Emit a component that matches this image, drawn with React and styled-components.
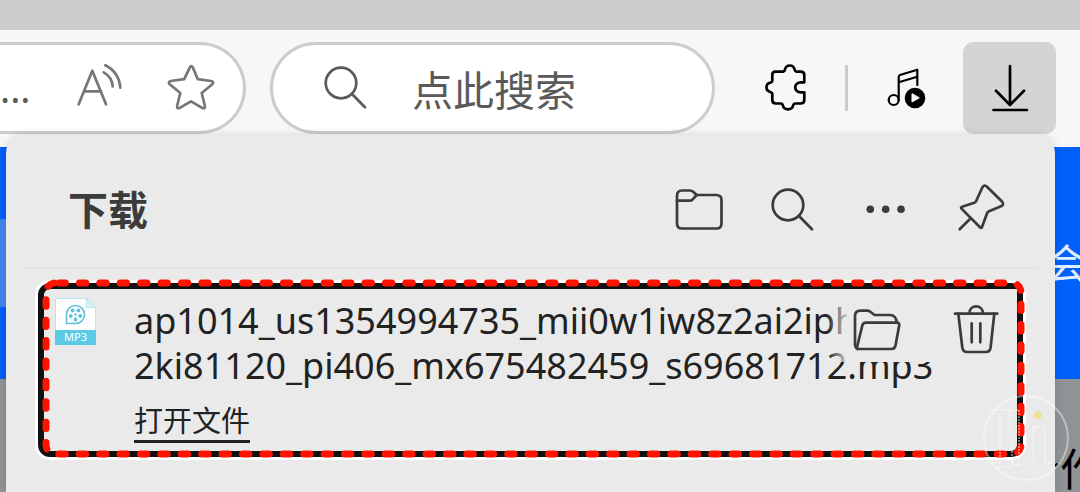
import styled, { createGlobalStyle } from "styled-components";

export default function App() {
	return (
		<Browser>
			<GlobalStyle />
			<TitleStrip />
			<Toolbar>
				<AddressBar>
					<AddressInput aria-label="Address" defaultValue="...." />
					<IconButton aria-label="Read aloud" tone="#767676">
						<ReadAloudIcon />
					</IconButton>
					<IconButton aria-label="Favorite" tone="#767676">
						<StarIcon />
					</IconButton>
				</AddressBar>
				<SearchBar>
					<SearchIcon />
					<SearchInput aria-label="搜索" placeholder="点此搜索" />
				</SearchBar>
				<ToolGroup>
					<IconButton aria-label="Extensions" tone="#000">
						<PuzzleIcon />
					</IconButton>
					<Separator />
					<IconButton aria-label="Music" tone="#000">
						<MusicIcon />
					</IconButton>
				</ToolGroup>
				<DownloadButton aria-label="下载">
					<DownloadIcon />
				</DownloadButton>
			</Toolbar>
			<Page>
				<Hero>
					<HeroCard />
					<HeroText>会</HeroText>
				</Hero>
				<Partners>
					<PartnersText>合作</PartnersText>
				</Partners>
			</Page>
			<Panel>
				<PanelHeader>
					<PanelTitle>下载</PanelTitle>
					<PanelTools>
						<IconButton aria-label="Open folder" tone="#3b3b3b">
							<FolderIcon />
						</IconButton>
						<IconButton aria-label="Search downloads" tone="#3b3b3b">
							<SearchIcon />
						</IconButton>
						<IconButton aria-label="More" tone="#3b3b3b">
							<MoreIcon />
						</IconButton>
						<IconButton aria-label="Pin" tone="#3b3b3b">
							<PinIcon />
						</IconButton>
					</PanelTools>
				</PanelHeader>
				<DownloadItem>
					<ItemBody>
						<FileIcon />
						<ItemInfo>
							<FileName>
								ap1014_us1354994735_mii0w1iw8z2ai2iph
								<br />
								2ki81120_pi406_mx675482459_s69681712.mp3
							</FileName>
							<OpenLink href="#">打开文件</OpenLink>
						</ItemInfo>
						<ItemActions>
							<IconButton aria-label="Show in folder" tone="#3b3b3b">
								<OpenFolderIcon />
							</IconButton>
							<IconButton aria-label="Delete" tone="#3b3b3b">
								<TrashIcon />
							</IconButton>
						</ItemActions>
					</ItemBody>
					<Marker aria-hidden="true">
						<rect width="100%" height="100%" rx="9" />
					</Marker>
				</DownloadItem>
			</Panel>
			<Watermark viewBox="0 0 86 86" aria-hidden="true">
				<circle cx="43" cy="43" r="42" />
				<g strokeDasharray="2 1">
					<path d="M6 15H36M17 18V68M27 16V40M36 15V70M29 47V72M12 72H30" />
					<path d="M50 32H62V68H74M50 32V66M30 70H38" />
				</g>
				<circle cx="55" cy="20" r="4" className="spark" />
			</Watermark>
		</Browser>
	);
}

function ReadAloudIcon() {
	return (
		<Icon>
			<path d="M3.7 40.3L17.3 6.7L31 40.3M9 27.3H26" />
			<path d="M28.7 8.3Q37 13 37.7 22.3M30.3 1.3Q44 8 45.3 23.7" />
		</Icon>
	);
}

function StarIcon() {
	return (
		<Icon>
			<path d="M22.7 3.6Q24.3 .8 25.9 3.6L30.8 15.2L44 17Q47.5 18 45.3 20.3L34.7 29L37.9 42Q38.2 45.2 35.2 43.9L24 37.3L12.8 43.9Q9.8 45.2 10.1 42L13.3 29L2.7 20.3Q.5 18 4 17L17.2 15.2Z" />
		</Icon>
	);
}

function SearchIcon() {
	return (
		<Icon>
			<circle cx="19" cy="19" r="15.3" />
			<path d="M30 30L43 43.3" />
		</Icon>
	);
}

function PuzzleIcon() {
	return (
		<Icon>
			<path d="M13.3 7.7H21.3C22.3 7.7 22.6 7 22.8 6C24 0 31.6 0 32.8 6C33 7 33.3 7.7 34.3 7.7H38.6Q42.3 7.7 42.3 11V18.3H39C31.3 18.3 31.3 28.3 39 28.3H42.3V36Q42.3 39.5 38.6 39.5H33C32 39.5 31.7 40 31.3 41C30 46.7 22 46.7 20.7 41C20.4 40 20 39.5 19 39.5H14Q10.3 39.5 10.3 36V30C10.3 29 9.7 28.5 8.8 28.2C3 27 3 19.7 8.8 18.5C9.7 18.2 10.3 17.8 10.3 16.8V11Q10.3 7.7 13.3 7.7Z" />
		</Icon>
	);
}

function MusicIcon() {
	return (
		<Icon>
			<g strokeWidth="2.2">
				<circle cx="10.7" cy="36" r="5" />
				<path d="M15.7 36V13Q15.7 11.5 17 11L34.3 5.7V21M15.7 18.3L34.3 12.7" />
			</g>
			<circle cx="32" cy="34" r="10.3" fill="#000" stroke="none" />
			<path d="M29 30V38L36 34Z" fill="#fff" stroke="#fff" strokeWidth="1" />
		</Icon>
	);
}

function DownloadIcon() {
	return (
		<Icon>
			<path d="M24 2V41M10 26.7L24 41L38 26.7M7.5 46H41" />
		</Icon>
	);
}

function FolderIcon() {
	return (
		<Icon>
			<path d="M2 10Q2 4.5 7 4.5H14.5Q17 4.5 18.5 6L21.7 9H41Q46.5 9 46.5 14V37.5Q46.5 42.5 41.5 42.5H7Q2 42.5 2 37.5Z" />
			<path d="M2 14.7H14.5Q16.5 14.7 17.7 13.3L21.7 9" />
		</Icon>
	);
}

function MoreIcon() {
	return (
		<Icon>
			<g fill="currentColor" stroke="none">
				<circle cx="7.3" cy="23.3" r="3.8" />
				<circle cx="22.7" cy="23.3" r="3.8" />
				<circle cx="38" cy="23.3" r="3.8" />
			</g>
		</Icon>
	);
}

function PinIcon() {
	return (
		<Icon>
			<path d="M25.3 1.5Q27.3 -2 30 .7L45 15.5Q47.3 18.3 44.5 20L31.5 25.5Q30.5 26 30 27.5L25 41Q24.4 42.6 23 41.3L4.5 22.6Q3.3 21.3 5 20.8L17.3 16.8Q18.7 16.3 19.2 15Z" />
			<path d="M13.7 32.3L2.7 43.3" />
		</Icon>
	);
}

function OpenFolderIcon() {
	return (
		<Icon>
			<path d="M4.5 43Q2 41.5 2 38V10Q2 4.7 7.5 4.7H14Q16 4.7 17.3 5.8L21.5 9H37Q43 9 43.7 16.5" />
			<path d="M13 16.7H44Q46.7 16.7 46.2 19.5L42.5 39.5Q41.8 43 38.5 43H6.5Q3.5 43 4.3 40L9.3 19.5Q10 16.7 13 16.7Z" />
		</Icon>
	);
}

function TrashIcon() {
	return (
		<Icon>
			<path d="M3 7.7H45.3M17.3 7.7C17.3 -2 31 -2 31 7.7" />
			<path d="M6.3 7.7L10.3 41.5Q11 46 15 46H34Q38 46 38.6 41.5L42.3 7.7M19.7 17.3V36.3M28.3 17.3V36.3" />
		</Icon>
	);
}

function FileIcon() {
	return (
		<FileSvg viewBox="0 0 41 47" aria-hidden="true">
			<path d="M.5 .5H31.5L40.5 9.5V46.5H.5Z" fill="#fff" stroke="#b4e6f2" />
			<path d="M31.5 .5V9.5H40.5Z" fill="#d8f1f7" stroke="#b4e6f2" />
			<path d="M0 32H41V47H0Z" fill="#5bcbe5" />
			<g fill="none" stroke="#5bc0dc" strokeWidth="1.5">
				<path d="M11.5 25.5V16.5A9 9 0 1 1 20.5 25.5Z" />
			</g>
			<g fill="#5bc0dc">
				<circle cx="20.5" cy="16.5" r="1.2" />
				<circle cx="20.5" cy="21.5" r="1.9" />
				<circle cx="15.8" cy="18" r="1.9" />
				<circle cx="25.2" cy="18" r="1.9" />
				<circle cx="17.6" cy="12.5" r="1.9" />
				<circle cx="23.4" cy="12.5" r="1.9" />
			</g>
			<text x="20.5" y="43" textAnchor="middle">
				MP3
			</text>
		</FileSvg>
	);
}

const GlobalStyle = createGlobalStyle`
	* {
		box-sizing: border-box;
	}
	body {
		margin: 0;
		font-family: "Noto Sans", "Noto Sans CJK SC", sans-serif;
	}
	button, input {
		border: 0;
		padding: 0;
		background: none;
		font-family: inherit;
		outline: none;
	}
`;

const Browser = styled.div`
	position: relative;
	display: flex;
	flex-direction: column;
	min-height: 100vh;
	overflow: hidden;
`;

const TitleStrip = styled.div`
	height: 30px;
	background: #ccc;
`;

const Toolbar = styled.header`
	display: flex;
	padding: 12px 24px 13px 0;
	background: #f7f7f7;
`;

const AddressBar = styled.div`
	flex: 1;
	min-width: 0;
	height: 92px;
	display: flex;
	align-items: center;
	gap: 44px;
	padding-right: 28px;
	background: #fff;
	border: 3px solid #ccc;
	border-left: 0;
	border-radius: 0 46px 46px 0;
`;

const AddressInput = styled.input`
	flex: 1;
	width: 0;
	min-width: 0;
	font-size: 38px;
	line-height: 48px;
	text-align: right;
	color: #5a5a5a;
`;

const SearchBar = styled.label`
	width: 445px;
	height: 92px;
	margin-left: 24px;
	display: flex;
	align-items: center;
	gap: 42px;
	padding: 0 49px;
	color: #5a5a5a;
	background: #fff;
	border: 3px solid #ccc;
	border-radius: 46px;
`;

const SearchInput = styled.input`
	flex: 1;
	min-width: 0;
	font-size: 41px;
	line-height: 60px;
	color: #5a5a5a;
	font-family: "Noto Sans CJK SC", sans-serif;
	&::placeholder {
		color: #5a5a5a;
		opacity: 1;
	}
`;

const ToolGroup = styled.div`
	display: flex;
	align-items: center;
	gap: 35px;
	padding: 0 32px 0 47px;
`;

const Separator = styled.div`
	width: 3px;
	height: 46px;
	background: #ccc;
`;

const IconButton = styled.button`
	flex: none;
	width: 48px;
	height: 48px;
	color: ${({ tone }) => tone};
`;

const DownloadButton = styled.button`
	width: 93px;
	height: 92px;
	display: flex;
	justify-content: center;
	align-items: center;
	background: #d4d4d4;
	border-radius: 10px;
	color: #000;
`;

const Icon = styled.svg.attrs({ viewBox: "0 0 48 48" })`
	display: block;
	flex: none;
	width: 48px;
	height: 48px;
	overflow: visible;
	fill: none;
	stroke: currentColor;
	stroke-width: 2.7;
	stroke-linecap: round;
	stroke-linejoin: round;
`;

const Page = styled.main`
	flex: 1;
	display: flex;
	flex-direction: column;
`;

const Hero = styled.section`
	height: 232px;
	display: flex;
	justify-content: space-between;
	align-items: center;
	background: #0060fa;
`;

const HeroCard = styled.div`
	width: 50%;
	height: 88px;
	background: #4385ec;
`;

const HeroText = styled.span`
	margin-right: -6px;
	font-size: 40px;
	line-height: 48px;
	color: #e2eeff;
`;

const Partners = styled.section`
	flex: 1;
	display: flex;
	justify-content: flex-end;
	padding-top: 67px;
	background: #909395;
`;

const PartnersText = styled.span`
	margin-right: -24px;
	font-size: 44px;
	line-height: 46px;
	color: #000;
`;

const Panel = styled.aside`
	position: absolute;
	top: 135px;
	bottom: 0;
	left: 6px;
	right: 25px;
	background: #eaeaea;
	border-radius: 18px 18px 0 0;
	box-shadow: 0 0 8px rgba(0, 0, 0, 0.14);
`;

const PanelHeader = styled.div`
	display: flex;
	justify-content: space-between;
	align-items: center;
	height: 134px;
	margin: 0 17px;
	padding: 18px 33px 0 45px;
	border-bottom: 2px solid #e4e4e4;
`;

const PanelTitle = styled.h1`
	margin: 0;
	font-size: 40px;
	line-height: 48px;
	font-weight: 700;
	color: #3b3b3b;
`;

const PanelTools = styled.div`
	display: flex;
	gap: 46px;
`;

const DownloadItem = styled.article`
	position: relative;
	height: 180px;
	margin: 11px 29px 0;
	border: 3px solid #fff;
	border-radius: 15px;
	background: #fff;
`;

const ItemBody = styled.div`
	position: relative;
	display: flex;
	align-items: flex-start;
	gap: 38px;
	height: 100%;
	padding: 9px 0 0 11px;
	border: 6px solid #111;
	border-radius: 12px;
	background: #eaeaea;
`;

const FileSvg = styled.svg`
	flex: none;
	width: 41px;
	height: 47px;
	text {
		fill: #fff;
		font-size: 11px;
	}
`;

const ItemInfo = styled.div`
	flex: 1;
	min-width: 0;
`;

const FileName = styled.div`
	font-size: 36px;
	line-height: 45px;
	white-space: nowrap;
	color: #222;
`;

const OpenLink = styled.a`
	display: inline-block;
	margin-top: 14px;
	font-size: 29px;
	line-height: 38px;
	color: #222;
	text-decoration: none;
	border-bottom: 3px solid #222;
`;

const ItemActions = styled.div`
	position: absolute;
	top: 0;
	right: 0;
	display: flex;
	gap: 51px;
	height: 73px;
	padding: 17px 17px 0 6px;
	background: #eaeaea;
	&::before {
		content: "";
		position: absolute;
		top: 0;
		bottom: 0;
		right: 100%;
		width: 20px;
		background: linear-gradient(
			to right,
			rgba(234, 234, 234, 0),
			rgba(234, 234, 234, 0.85)
		);
	}
`;

/* dashed highlight drawn on top of the focus ring */
const Marker = styled.svg`
	position: absolute;
	top: 0;
	left: 8px;
	width: calc(100% - 10px);
	height: calc(100% - 3px);
	overflow: visible;
	pointer-events: none;
	fill: none;
	stroke: #ff1200;
	stroke-width: 7;
	stroke-linecap: round;
	stroke-dasharray: 6.4 14;
	stroke-dashoffset: -4;
`;

const Watermark = styled.svg`
	position: absolute;
	right: 11px;
	bottom: 11px;
	width: 86px;
	height: 86px;
	fill: none;
	stroke: rgba(255, 255, 255, 0.4);
	stroke-width: 2;
	pointer-events: none;
	.spark {
		fill: #eee29a;
		stroke: none;
	}
`;
